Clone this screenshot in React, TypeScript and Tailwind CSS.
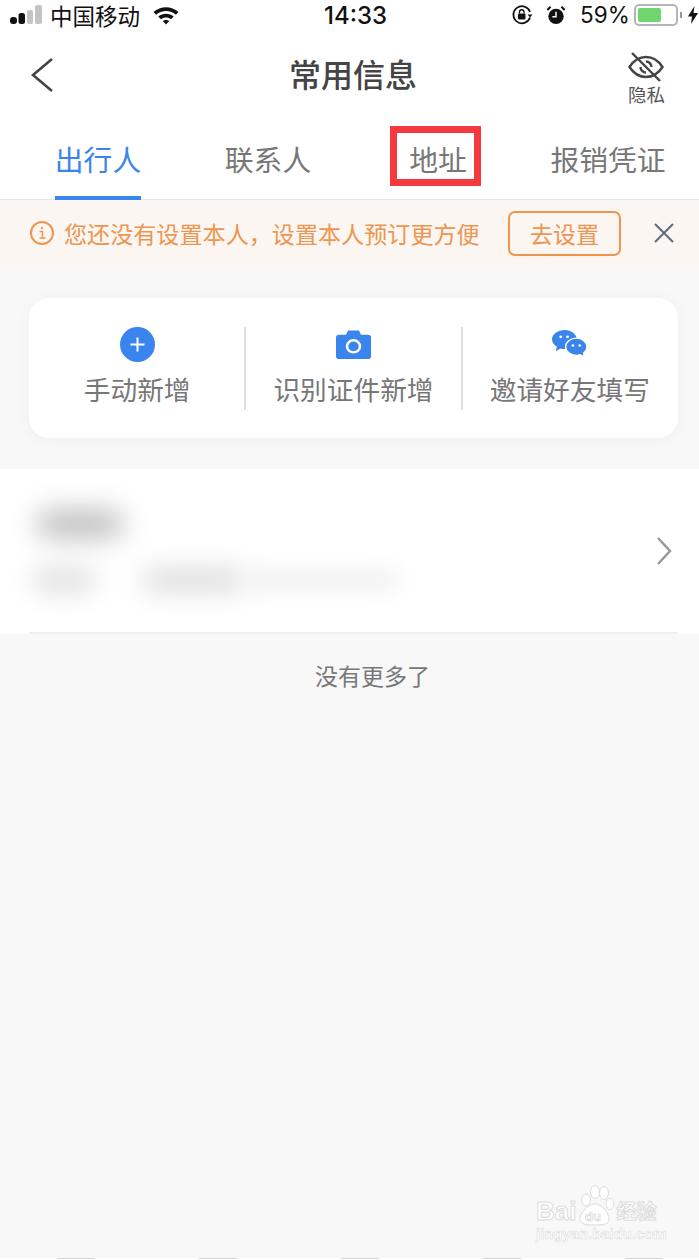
const CJK = { fontFamily: '"Noto Sans CJK SC", "Noto Sans", sans-serif' };

function Signal() {
  return (
    <svg width="32" height="22" viewBox="0 0 32 22" className="ml-[10px]">
      <rect x="0" y="13" width="7" height="7" rx="3" fill="#111" />
      <rect x="8.500" y="9" width="6.500" height="11" rx="2.500" fill="#111" />
      <rect x="17" y="6" width="6" height="14" rx="2" fill="#c4c4c4" />
      <rect x="25" y="1" width="7" height="19" rx="2" fill="#c4c4c4" />
    </svg>
  );
}

function Wifi() {
  return (
    <svg width="28" height="20" viewBox="0 0 28 20" className="ml-[12px]">
      <path d="M1.500 7C8.500 .6 19.500 .6 26.500 7l-2.600 2.800C18.200 4.800 9.800 4.800 4.100 9.800z" fill="#111" />
      <path d="M6.300 11.500c4.500-3.700 10.900-3.700 15.400 0l-2.600 2.700c-3-2.200-7.200-2.200-10.200 0z" fill="#111" />
      <path d="M10.800 16c1.900-1.300 4.500-1.300 6.400 0L14 19.500z" fill="#111" />
    </svg>
  );
}

function RotationLock() {
  return (
    <svg width="22" height="22" viewBox="0 0 22 22" fill="none">
      <path d="M19 13.500A8.500 8.500 0 1 1 19 8" stroke="#111" strokeWidth="1.800" />
      <path d="M16.500 10.500h5l-2.500 3z" fill="#111" />
      <rect x="7" y="9.500" width="7.500" height="6" rx="1" fill="#111" />
      <path d="M8.500 9.500V8a2.200 2.200 0 0 1 4.500 0v1.500" stroke="#111" strokeWidth="1.300" />
    </svg>
  );
}

function Alarm() {
  return (
    <svg width="20" height="22" viewBox="0 0 22 22" fill="none">
      <circle cx="11" cy="12.500" r="8.500" fill="#111" />
      <path d="M11 7.500v5.500H7" stroke="#fff" strokeWidth="1.600" />
      <path d="M1.500 5.500 5 2M20.500 5.500 17 2" stroke="#111" strokeWidth="2.200" />
    </svg>
  );
}

function Battery() {
  return (
    <div className="ml-[7px] flex items-center">
      <div className="h-[22px] w-[44px] rounded-[5px] border-2 border-[#b5b5b5] p-[2px]">
        <div className="h-full w-[23px] rounded-[2px] bg-[#6fd66f]" />
      </div>
      <div className="ml-[2px] h-[6px] w-[2px] bg-[#999]" />
    </div>
  );
}

function Bolt() {
  return (
    <svg width="10" height="18" viewBox="0 0 10 18" className="ml-[6px]">
      <path d="M6.500 0 0 10.500h4L3 18l7-11H5.500z" fill="#111" />
    </svg>
  );
}

function EyeOff() {
  return (
    <svg width="36" height="30" viewBox="0 0 36 30" fill="none" stroke="#444" strokeWidth="2.400">
      <path d="M1.500 15C6 8 11.500 5 18 5s12 3 16.500 10C30 22 24.500 25 18 25S6 22 1.500 15z" />
      <path d="M18 9.500a5.500 5.500 0 0 1 5.500 5.500M18 20.500a5.500 5.500 0 0 1-5.500-5.500" />
      <path d="M4 1l28 28" />
    </svg>
  );
}

function PlusIcon() {
  return (
    <svg width="35" height="35" viewBox="0 0 35 35">
      <circle cx="17.500" cy="17.500" r="17.500" fill="#3a84ee" />
      <path d="M17.500 10.500v14M10.500 17.500h14" stroke="#fff" strokeWidth="2" />
    </svg>
  );
}

function CameraIcon() {
  return (
    <svg width="35" height="29" viewBox="0 0 35 31" preserveAspectRatio="none">
      <path d="M3 5h7l2-4.500h11L25 5h7a3 3 0 0 1 3 3v20a3 3 0 0 1-3 3H3a3 3 0 0 1-3-3V8a3 3 0 0 1 3-3z" fill="#3a84ee" />
      <circle cx="17.500" cy="17.500" r="6.500" fill="none" stroke="#fff" strokeWidth="2.500" />
    </svg>
  );
}

function WechatIcon() {
  return (
    <svg width="35" height="29" viewBox="0 0 36 32" preserveAspectRatio="none">
      <path d="M13 0c7 0 12.500 4.800 12.500 10.500S20 21 13 21c-1.500 0-3-.2-4.300-.7L4 23.500l1-5C2 16.500 0 13.700 0 10.500 0 4.800 6 0 13 0z" fill="#3a84ee" />
      <path d="M25 9c6 0 11 4.200 11 9.500 0 2.800-1.400 5.200-3.500 7l.8 4.500-4.300-2.700c-1.200.4-2.600.7-4 .7-6 0-11-4.200-11-9.500S19 9 25 9z" fill="#3a84ee" stroke="#fff" strokeWidth="1.500" />
      <circle cx="9" cy="7.500" r="1.500" fill="#fff" />
      <circle cx="16" cy="7.500" r="1.500" fill="#fff" />
      <circle cx="21.500" cy="17" r="1.400" fill="#fff" />
      <circle cx="28.500" cy="17" r="1.400" fill="#fff" />
    </svg>
  );
}

function Tab({ label, active }: { label: string; active?: boolean }) {
  return (
    <div className="relative flex h-full w-[170px] items-start justify-center pt-[17px]">
      <span className={`text-[28.800px] leading-[44px] ${active ? "text-[#3a84ee]" : "text-[#777]"}`}>{label}</span>
      {active && <div className="absolute -bottom-[1px] left-[42px] h-[4px] w-[86px] bg-[#3a84ee]" />}
    </div>
  );
}

function Action({ icon, label, divider }: { icon: React.ReactNode; label: string; divider?: boolean }) {
  return (
    <div className="relative flex flex-1 flex-col items-center">
      <div className="flex h-[36px] items-center justify-center">{icon}</div>
      <span className="mt-[8px] text-[26.700px] leading-[38px] whitespace-nowrap text-[#777]">{label}</span>
      {divider && <div className="absolute -right-px top-[1px] h-[83px] w-[2px] bg-[#dedede]" />}
    </div>
  );
}

function Watermark() {
  return (
    <div className="absolute left-[536px] top-[1184px] flex w-[130px] flex-col text-white" style={{ fontFamily: '"Liberation Sans", "Noto Sans CJK SC", sans-serif' }}>
      <div className="flex items-end">
        <span className="text-[26px] font-bold leading-[30px] [-webkit-text-stroke:1px_#dcdcdc]">Bai</span>
        <svg width="40" height="42" viewBox="0 0 40 42" className="-ml-[1px]" fill="#fff" stroke="#dcdcdc">
          <ellipse cx="11" cy="16" rx="4.500" ry="6" />
          <ellipse cx="20" cy="8" rx="4.500" ry="6.500" />
          <ellipse cx="29" cy="9" rx="4.500" ry="6.500" />
          <ellipse cx="35" cy="20" rx="4" ry="5.500" />
          <path d="M20 20c6 0 14 8 14 15 0 5-5 6-14 6S5 40 5 35c0-7 9-15 15-15z" />
          <text x="10" y="37" fontSize="13" fontWeight="700" fill="#fff" stroke="#d0d0d0" strokeWidth=".6">du</text>
        </svg>
        <span className="ml-[1px] text-[20px] font-bold leading-[30px] [-webkit-text-stroke:1px_#dcdcdc]" style={CJK}>经验</span>
      </div>
      <span className="text-[14.500px] font-bold leading-[16px] tracking-[0.2px] whitespace-nowrap [-webkit-text-stroke:.6px_#dcdcdc]">jingyan.baidu.com</span>
    </div>
  );
}

export default function App() {
  return (
    <div className="relative flex h-[1260px] w-[699px] flex-col overflow-hidden bg-[#f8f8f8]" style={CJK}>
      {/* status bar */}
      <div className="relative flex h-[32px] items-center bg-white pb-[2px] text-[#111]">
        <Signal />
        <span className="ml-[8px] text-[22.500px] leading-[30px]">中国移动</span>
        <Wifi />
        <span className="absolute left-[324px] top-[1px] text-[24px] font-medium leading-[30px]" style={{ fontFamily: "Inter, sans-serif" }}>14:33</span>
        <div className="ml-auto flex items-center pr-[1px]">
          <RotationLock />
          <div className="ml-[13px]"><Alarm /></div>
          <span className="ml-[14px] w-[47px] text-[22.500px] leading-[30px]" style={{ fontFamily: "Inter, sans-serif" }}>59%</span>
          <Battery />
          <Bolt />
        </div>
      </div>

      {/* nav */}
      <div className="relative flex h-[88px] items-center justify-between bg-white pl-[30px] pr-[34px]">
        <svg width="24" height="36" viewBox="0 0 24 36" fill="none" className="-mt-[2px]" stroke="#444" strokeWidth="2.600">
          <path d="M22 2 3 18l19 16" />
        </svg>
        <span className="absolute left-[289px] top-[18px] text-[32px] font-medium leading-[46px] text-[#444]">常用信息</span>
        <div className="mt-[6px] flex flex-col items-center">
          <EyeOff />
          <span className="text-[18.500px] leading-[24px] text-[#555]">隐私</span>
        </div>
      </div>

      {/* tabs */}
      <div className="flex h-[80px] border-b border-[#e6e6e6] bg-white pl-[13px]">
        <Tab label="出行人" active />
        <Tab label="联系人" />
        <Tab label="地址" />
        <Tab label="报销凭证" />
      </div>

      {/* notice */}
      <div className="flex h-[66px] items-center bg-[#fbf6f2] pl-[30px] text-[#ee9550]">
        <svg width="24" height="24" viewBox="0 0 24 24" fill="none" stroke="#ee9550" strokeWidth="2">
          <circle cx="12" cy="12" r="11" />
          <path d="M9.500 10.500H12.500V17M9.500 17h6" strokeWidth="1.500" />
          <circle cx="12" cy="7" r="1.200" fill="#ee9550" stroke="none" />
        </svg>
        <span className="ml-[10px] w-[444px] text-[23.100px] leading-[34px] whitespace-nowrap">您还没有设置本人，设置本人预订更方便</span>
        <div className="flex h-[45px] w-[113px] items-center justify-center rounded-[7px] border-2 border-[#ee9550] text-[23px]">去设置</div>
        <svg width="20" height="20" viewBox="0 0 20 20" fill="none" stroke="#5f6b7a" strokeWidth="2" className="ml-[33px]">
          <path d="M1 1l18 18M19 1 1 19" />
        </svg>
      </div>

      {/* actions */}
      <div className="ml-[29px] mr-[21px] mt-[32px] flex h-[140px] items-start rounded-[20px] bg-white pt-[28px] shadow-[0_2px_16px_rgba(0,0,0,0.04)]">
        <Action icon={<PlusIcon />} label="手动新增" divider />
        <Action icon={<CameraIcon />} label="识别证件新增" divider />
        <Action icon={<WechatIcon />} label="邀请好友填写" />
      </div>

      {/* traveller row (name is blurred in the source) */}
      <div className="mt-[31px] bg-white pl-[29px] pr-[21px]">
        <div className="flex h-[165px] items-center justify-between border-b-2 border-[#efefef] pr-[6px]">
          <div className="flex flex-col">
            <div className="ml-[8px] h-[26px] w-[86px] rounded-full bg-[#b8b8b8] blur-[14px]" />
            <div className="mt-[32px] flex items-center">
              <div className="ml-[4px] h-[22px] w-[62px] rounded-full bg-[#dcdcdc] blur-[13px]" />
              <div className="ml-[48px] h-[22px] w-[100px] rounded-full bg-[#dadada] blur-[13px]" />
              <div className="h-[16px] w-[155px] rounded-full bg-[#ececec] blur-[11px]" />
            </div>
          </div>
          <svg width="16" height="30" viewBox="0 0 16 30" fill="none" stroke="#999" strokeWidth="2.500" className="mt-[1px]">
            <path d="M2 2l12 13L2 28" />
          </svg>
        </div>
      </div>

      <div className="mt-[23px] flex justify-center pl-[46px] text-[23px] leading-[36px] text-[#777]">没有更多了</div>

      {/* clipped tab bar at the very bottom */}
      <div className="mt-auto flex h-[2px] gap-[104px] overflow-hidden bg-white pl-[57px]">
        <div className="h-px w-[38px] bg-[#d4d4d4]" />
        <div className="h-px w-[38px] bg-[#d4d4d4]" />
        <div className="h-px w-[38px] bg-[#d4d4d4]" />
        <div className="h-px w-[38px] bg-[#d4d4d4]" />
        <div className="h-px w-[38px] bg-[#d4d4d4]" />
      </div>

      {/* annotation */}
      <div className="absolute left-[390px] top-[126px] h-[60px] w-[91px] border-[7px] border-[#f33a3f]" />
      <Watermark />
    </div>
  );
}
